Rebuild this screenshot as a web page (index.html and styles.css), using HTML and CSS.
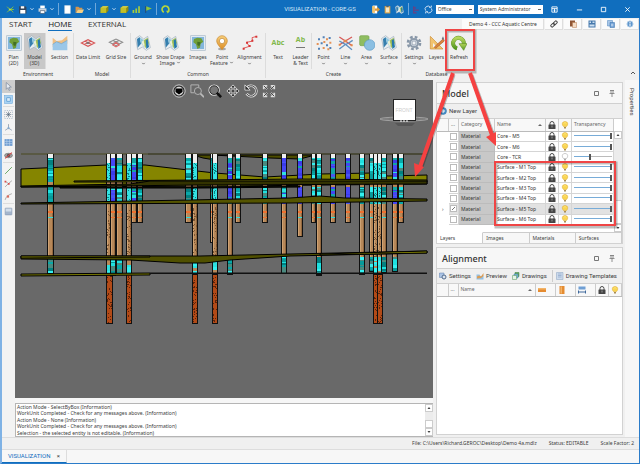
FILE: index.html
```html
<!DOCTYPE html>
<html lang="en">
<head>
<meta charset="utf-8">
<title>VISUALIZATION - CORE-GS</title>
<link rel="stylesheet" href="styles.css">
</head>
<body>
<svg class="sprite" aria-hidden="true">
  <defs>
    <linearGradient id="gold" x1="0" y1="0" x2="0" y2="1"><stop offset="0" stop-color="#f8cf79"/><stop offset="1" stop-color="#dc8d25"/></linearGradient>
    <linearGradient id="leaf" x1="0" y1="0" x2="0" y2="1"><stop offset="0" stop-color="#b5d65b"/><stop offset="1" stop-color="#549820"/></linearGradient>
    <symbol id="chev" viewBox="0 0 8 8"><path d="M2 3l2 2 2-2" fill="none" stroke="currentColor"/></symbol>
    <symbol id="logo" viewBox="0 0 16 16"><path d="M2 3l5 5-5 5M7 8h7M8 8l5-5M8 8l5 5" fill="none" stroke="#8ac33e" stroke-width="1.6"/><circle cx="7" cy="8" r="2" fill="#b9df45"/></symbol>
    <symbol id="save" viewBox="0 0 16 16"><path d="M2 2h11l2 2v11H2z" fill="#31445c"/><path d="M5 2h6v4H5zM4 9h9v6H4z" fill="#fff"/></symbol>
    <symbol id="print" viewBox="0 0 16 16"><path d="M4 1h8v5H4z" fill="#fff"/><path d="M1 6h14v6H1z" fill="#cbd5df"/><path d="M4 10h8v5H4z" fill="#fff" stroke="#31445c"/></symbol>
    <symbol id="page" viewBox="0 0 16 16"><path d="M3 1h10v14H3z" fill="#fff" stroke="#d6dde6"/></symbol>
    <symbol id="folder" viewBox="0 0 16 16"><path d="M1 3h5l2 2h5v3H5l-3 6H1z" fill="#d7954a"/><path d="M5 8h11l-3 6H2z" fill="#f6ce82"/></symbol>
    <symbol id="cube" viewBox="0 0 16 16"><path d="M1 5l4-3h10v8l-4 4H1z" fill="#8b8a10"/><path d="M1 5l4-3h10l-4 3z" fill="#e4df55"/><path d="M1 5h10v9H1z" fill="#c2bf27"/></symbol>
    <symbol id="bars" viewBox="0 0 16 16"><path d="M1 9h3v5H1zM6 6h3v8H6zM11 2h3v12h-3z" fill="#a7cd3a"/></symbol>
    <symbol id="flag" viewBox="0 0 16 16"><path d="M3 2v12" stroke="#31445c" stroke-width="1.5"/><path d="M4 2l10 4-10 4z" fill="#8fc43b"/></symbol>
    <symbol id="cycle" viewBox="0 0 16 16"><path d="M5 13A6 6 0 1 1 13 11" fill="none" stroke="#b6d63c" stroke-width="3"/><path d="M9 10h7l-4 5z" fill="#b6d63c"/></symbol>
    <symbol id="exit" viewBox="0 0 16 16"><path d="M3 1h8v14H3z" fill="#fff"/><path d="M2 2h5v12H2z" fill="#f2c26b"/><path d="M7 6h4V3l5 5-5 5v-3H7z" fill="#dd9a3a"/></symbol>
    <symbol id="clip" viewBox="0 0 16 16"><path d="M3 2h10v13H3z" fill="#dca44c"/><path d="M5 4h6v9H5z" fill="#f4e7c5"/><path d="M6 1h4v3H6z" fill="#54616f"/></symbol>
    <symbol id="map" viewBox="0 0 24 24"><path d="M1 5l6-4 6 5 6-4 4 17-6 4-6-5-7 4z" fill="#e9eef2" stroke="#9faebb"/><path d="M3 6l4-3 2 10-5 6z" fill="#367fae"/><path d="M7 3l6 5 1 11-5-7z" fill="#8fc7df"/><path d="M13 8l6-4 2 8-6 8z" fill="#a6c25a"/><path d="M10 10l3-2 1 7-2 2z" fill="#edf1d5"/><path d="M16 8l3-2 2 12-4 3z" fill="#287aaa"/></symbol>
    <symbol id="plan" viewBox="0 0 24 24"><rect x="1" y="1" width="22" height="22" fill="#e1eaf2" stroke="#a9bac8"/><rect x="3" y="3" width="18" height="18" fill="#83b6dc"/><path d="M6 6l5-2 6 1 3 5-4 3-1 6-4 2-2-7-4-3z" fill="#6f9e37"/><path d="M11 10l5 1-2 6-3-2z" fill="#426f24"/></symbol>
    <symbol id="section" viewBox="0 0 24 24"><path d="M1 4l6 5 8-1 8-7v12l-8 3-8-2-6 4z" fill="#f0bf83"/><path d="M1 14l6-4 7 3 9-5v15H1z" fill="#9bc7e8"/><path d="M1 14l6-4 7 3 9-5" fill="none" stroke="#6ba3cf"/></symbol>
    <symbol id="limit" viewBox="0 0 24 24"><path d="M2 12l10-5 10 5-10 5zM7 9l10 5M17 9L7 14" fill="none" stroke="#d85757" stroke-width="1.600"/><path d="M9 12l3-2 3 2-3 2z" fill="#777"/></symbol>
    <symbol id="gridsize" viewBox="0 0 24 24"><path d="M2 11l10-5 10 5-10 5zM7 8l10 5M17 8L7 13" fill="none" stroke="#8d8d8d" stroke-width="1.600"/><path d="M7 15l5-4 5 4-5 3z" fill="none" stroke="#df6565" stroke-width="1.600"/></symbol>
    <symbol id="pin" viewBox="0 0 24 24"><ellipse cx="12" cy="21" rx="6" ry="2" fill="#aaa"/><path d="M12 22C8 17 4 13 4 9a8 8 0 0 1 16 0c0 4-4 8-8 13z" fill="url(#gold)" stroke="#c88b34"/><circle cx="12" cy="9" r="4" fill="#fff" stroke="#b98231"/></symbol>
    <symbol id="align" viewBox="0 0 24 24"><path d="M2 20l9-3-4-6 9-2-1-5 7-2" fill="none" stroke="#e25555" stroke-width="1.4"/><path d="M1 19h3v3H1zM10 15h3v3h-3zM6 10h3v3H6zM14 7h3v3h-3zM20 1h3v3h-3z" fill="#d73636"/></symbol>
    <symbol id="points" viewBox="0 0 24 24"><g fill="#5281b7"><path d="M3 5h3v3H3zM10 2h3v3h-3zM19 3h3v3h-3zM7 11h3v3H7zM15 14h3v3h-3zM3 19h3v3H3zM20 18h3v3h-3z"/></g><g fill="#e59257"><path d="M15 5h3v3h-3zM1 12h3v3H1zM11 9h3v3h-3zM20 10h3v3h-3zM10 18h3v3h-3zM17 20h3v3h-3z"/></g></symbol>
    <symbol id="lines" viewBox="0 0 24 24"><path d="M2 3l9 6 10-6M2 15l9-6 10 7" fill="none" stroke="#d75b58" stroke-width="2"/><path d="M2 21l8-6 6-3 6-4M2 9l9 5 10 8" fill="none" stroke="#5f8fc0" stroke-width="2"/><path d="M9 7h4v4H9zM1 13h3v3H1zM19 14h3v3h-3z" fill="#e38a4b"/></symbol>
    <symbol id="area" viewBox="0 0 24 24"><rect x="1" y="1" width="14" height="15" rx="2" fill="#8fbd61" stroke="#77a64f"/><circle cx="16" cy="15" r="8" fill="#8bbfe2" stroke="#5e9bc7"/></symbol>
    <symbol id="gear" viewBox="0 0 24 24"><circle cx="12" cy="12" r="9" fill="none" stroke="#8796a7" stroke-width="4" stroke-dasharray="4 3.07"/><circle cx="12" cy="12" r="6" fill="#d9e0e7" stroke="#8e9cac" stroke-width="3"/><circle cx="12" cy="12" r="3" fill="#f2f4f6" stroke="#8392a4"/></symbol>
    <symbol id="draft" viewBox="0 0 24 24"><path d="M2 2v19h19z" fill="#f1c36e" stroke="#cf8e35"/><path d="M6 12v6h6z" fill="#f0f0f0"/><path d="M8 18L21 6l2 3-13 11z" fill="#db853d" stroke="#a75c28"/><path d="M19 6l2-4 2 5z" fill="#6f7380"/></symbol>
    <symbol id="refresh" viewBox="0 0 24 24"><path d="M9 20A8 8 0 1 1 19 14" fill="none" stroke="#608f29" stroke-width="6"/><path d="M9 20A8 8 0 1 1 19 14" fill="none" stroke="url(#leaf)" stroke-width="5"/><path d="M12 13h12l-5 10z" fill="url(#leaf)" stroke="#608f29"/></symbol>
    <symbol id="lock" viewBox="0 0 16 16"><path d="M4 8V5a4 4 0 0 1 8 0v3" fill="none" stroke="#4b4b4b" stroke-width="2"/><rect x="1" y="7" width="14" height="9" rx="1" fill="#454545"/><path d="M7 9h2v4H7z" fill="#999"/></symbol>
    <symbol id="bulb" viewBox="0 0 16 16"><path d="M5 11C1 7 2 1 8 1s7 6 3 10z" fill="#f9d552" stroke="#dba72d"/><path d="M6 5l2-2 2 2" fill="none" stroke="#fff8bf"/><path d="M6 12h4v3H6z" fill="#a88d55"/></symbol>
    <symbol id="bulboff" viewBox="0 0 16 16"><path d="M5 11C1 7 2 1 8 1s7 6 3 10z" fill="#fff" stroke="#999"/><path d="M6 12h4v3H6z" fill="#aaa"/></symbol>
    <symbol id="plus" viewBox="0 0 16 16"><circle cx="8" cy="8" r="7" fill="#4a90c8" stroke="#2c6ca5"/><path d="M8 4v8M4 8h8" stroke="#fff" stroke-width="2"/></symbol>
    <symbol id="maxi" viewBox="0 0 8 8"><path d="M2.500 2.500h4v4h-4z" fill="none" stroke="currentColor"/></symbol>
    <symbol id="tack" viewBox="0 0 8 8"><path d="M2 1.500h4M3 1v3M5 1v3M1.500 4.500h5M4 4v4" fill="none" stroke="currentColor" stroke-width=".8"/></symbol>
  </defs>
</svg>

<div class="window">
  <header class="titlebar">
    <div class="quick">
      <button class="qi" aria-label="Application"><svg><use href="#logo"/></svg></button>
      <button class="qi" aria-label="Save"><svg><use href="#save"/></svg></button>
      <button class="qc" aria-label="Save options"><svg><use href="#chev"/></svg></button>
      <button class="qi" aria-label="Print"><svg><use href="#print"/></svg></button>
      <button class="qc" aria-label="Print options"><svg><use href="#chev"/></svg></button>
      <i class="qs"></i>
      <button class="qi" aria-label="New"><svg><use href="#page"/></svg></button>
      <button class="qi" aria-label="Open"><svg><use href="#folder"/></svg></button>
      <button class="qc" aria-label="Open options"><svg><use href="#chev"/></svg></button>
      <i class="qs"></i>
      <button class="qi" aria-label="Solid"><svg><use href="#cube"/></svg></button>
      <button class="qc" aria-label="Solid options"><svg><use href="#chev"/></svg></button>
      <button class="qi" aria-label="Block"><svg><use href="#cube"/></svg></button>
      <button class="qi" aria-label="Chart"><svg><use href="#bars"/></svg></button>
      <button class="qi" aria-label="Flag"><svg><use href="#flag"/></svg></button>
      <i class="qs"></i>
      <button class="qi" aria-label="Update"><svg><use href="#cycle"/></svg></button>
    </div>
    <h1>VISUALIZATION - CORE-GS</h1>
    <div class="quick right">
      <button class="qi" aria-label="Export"><svg><use href="#exit"/></svg></button>
      <button class="qi" aria-label="Clipboard"><svg><use href="#clip"/></svg></button>
      <button class="qi" aria-label="Map"><svg><use href="#map"/></svg></button>
      <i class="qs"></i>
      <button class="qi" aria-label="Tree"><svg viewBox="0 0 16 16"><path d="M3 2v12h5M3 5h4M3 9h9" fill="none" stroke="#6d3f80" stroke-width="2"/></svg></button>
      <button class="qi" aria-label="Sync"><svg viewBox="0 0 16 16"><path d="M3 10a5 5 0 0 1 8-6M13 6a5 5 0 0 1-8 6M9 4h4V1M7 12H3v3" fill="none" stroke="#dbe9f7" stroke-width="1.6"/></svg></button>
      <select class="office" aria-label="Office"><option>Office</option></select>
      <select class="role" aria-label="Role"><option>System Administrator</option></select>
      <div class="winbtns">
        <button aria-label="Ribbon display"><svg viewBox="0 0 8 8"><path d="M1 1h6v6H1zM1 3h6M4 3v4M3 5h2" fill="none" stroke="#fff"/></svg></button>
        <button aria-label="Minimize"><svg viewBox="0 0 8 8"><path d="M1 4.500h6" stroke="#fff"/></svg></button>
        <button aria-label="Maximize"><svg viewBox="0 0 8 8"><path d="M1.500 1.500h5v5h-5z" fill="none" stroke="#fff"/></svg></button>
        <button aria-label="Close"><svg viewBox="0 0 8 8"><path d="M1.500 1.500l5 5M6.500 1.500l-5 5" stroke="#fff"/></svg></button>
      </div>
    </div>
  </header>

  <nav class="tabs">
    <a href="#start">START</a><a href="#home" class="on">HOME</a><a href="#external">EXTERNAL</a>
    <div class="project">
      <span>Demo 4 - CCC Aquatic Centre</span>
      <button aria-label="Link"><svg viewBox="0 0 16 16"><g fill="none" stroke="#444" stroke-width="2"><rect x="1" y="8" width="8" height="5" rx="2" transform="rotate(-45 5 10)"/><rect x="7" y="3" width="8" height="5" rx="2" transform="rotate(-45 11 6)"/></g></svg></button>
      <button aria-label="Paste"><svg viewBox="0 0 16 16"><path d="M2 1h10v12H2z" fill="#8f5636"/><path d="M7 5h8v10H7z" fill="#f3dcc6" stroke="#b67b4f"/></svg></button>
      <button aria-label="Calendar"><svg viewBox="0 0 16 16"><path d="M1 1h14v14H1z" fill="#4679ad"/><path d="M3 3h3v3H3zM9 3h4v3H9zM3 9h10v4H3z" fill="#cfe1f2"/></svg></button>
      <button aria-label="Copy"><svg viewBox="0 0 16 16"><path d="M1 1h10v11H1z" fill="#a9c7e8" stroke="#4b82bd"/><path d="M6 5h9v10H6z" fill="#6fa0d5" stroke="#376ca8"/><path d="M10 7v6M8 10h5" stroke="#fff"/></svg></button>
      <button aria-label="Information"><svg viewBox="0 0 16 16"><circle cx="8" cy="8" r="6" fill="#5f96cc" stroke="#a8c6e4" stroke-width="2"/><path d="M8 4v2M8 7v5" stroke="#fff" stroke-width="2"/></svg></button>
    </div>
  </nav>

  <div class="ribbon">
    <section class="group env"><div class="items">
      <button class="it s"><svg><use href="#plan"/></svg><span>Plan<br>(2D)</span></button>
      <button class="it s sel"><svg><use href="#map"/></svg><span>Model<br>(3D)</span></button>
      <button class="it l div"><svg><use href="#section"/></svg><span>Section</span></button>
    </div><h2>Environment</h2></section>
    <section class="group"><div class="items">
      <button class="it l"><svg><use href="#limit"/></svg><span>Data Limit</span></button>
      <button class="it l"><svg><use href="#gridsize"/></svg><span>Grid Size</span></button>
    </div><h2>Model</h2></section>
    <section class="group"><div class="items">
      <button class="it m"><svg><use href="#map"/></svg><span>Ground</span><svg class="c"><use href="#chev"/></svg></button>
      <button class="it xl"><svg><use href="#map"/></svg><span>Show Drape<br>Image <svg class="c"><use href="#chev"/></svg></span></button>
      <button class="it m"><svg><use href="#plan"/></svg><span>Images</span></button>
      <button class="it m"><svg><use href="#pin"/></svg><span>Point<br>Feature <svg class="c"><use href="#chev"/></svg></span></button>
      <button class="it xl"><svg><use href="#align"/></svg><span>Alignment</span><svg class="c"><use href="#chev"/></svg></button>
    </div><h2>Common</h2></section>
    <section class="group"><div class="items">
      <button class="it m"><b class="abc">Abc</b><span>Text</span></button>
      <button class="it s"><b class="abc lead">Ab</b><span>Leader<br>&amp; Text</span></button>
      <button class="it m div"><svg><use href="#points"/></svg><span>Point</span><svg class="c"><use href="#chev"/></svg></button>
      <button class="it s"><svg><use href="#lines"/></svg><span>Line</span><svg class="c"><use href="#chev"/></svg></button>
      <button class="it s"><svg><use href="#area"/></svg><span>Area</span><svg class="c"><use href="#chev"/></svg></button>
      <button class="it m"><svg><use href="#map"/></svg><span>Surface</span><svg class="c"><use href="#chev"/></svg></button>
    </div><h2>Create</h2></section>
    <section class="group last"><div class="items">
      <button class="it m"><svg><use href="#gear"/></svg><span>Settings</span><svg class="c"><use href="#chev"/></svg></button>
      <button class="it s"><svg><use href="#draft"/></svg><span>Layers</span></button>
      <button class="it m"><svg><use href="#refresh"/></svg><span>Refresh</span></button>
    </div><h2>Database</h2></section>
    <button class="collapse" aria-label="Collapse ribbon"><svg viewBox="0 0 8 8"><path d="M2 5l2-2 2 2" fill="none" stroke="#555"/></svg></button>
  </div>

  <main class="work">
    <aside class="tools">
      <button class="on" aria-label="Select"><svg viewBox="0 0 16 16"><path d="M4 1v12l3-3 2 5 2-1-2-5h4z" fill="#e6ebf2" stroke="#65758c"/></svg></button>
      <button aria-label="Select by box"><svg viewBox="0 0 16 16"><rect x="1" y="1" width="14" height="14" fill="#a9d2f3" stroke="#6ba9dc"/><rect x="5" y="5" width="6" height="6" fill="#d9ecfb" stroke="#3b83c0"/></svg></button>
      <hr>
      <button aria-label="Extents"><svg viewBox="0 0 16 16"><rect x="1" y="1" width="14" height="14" fill="none" stroke="#7d97b1" stroke-dasharray="2 2"/><path d="M8 3v10M3 8h10M4 4l8 8M12 4l-8 8" stroke="#4c6076"/></svg></button>
      <button aria-label="Axes"><svg viewBox="0 0 16 16"><path d="M8 2v7l-6 4M8 9l6 4" fill="none" stroke="#5d7390"/><circle cx="8" cy="9" r="2" fill="#88add0"/></svg></button>
      <hr>
      <button aria-label="Grid"><svg viewBox="0 0 16 16"><path d="M1 2h14v12H1z" fill="#6c9bd0"/><path d="M1 6h14M1 10h14M5 2v12M10 2v12" stroke="#c4daf0"/></svg></button>
      <button aria-label="Hide"><svg viewBox="0 0 16 16"><ellipse cx="8" cy="8" rx="7" ry="4" fill="#a4a4a4" stroke="#666"/><circle cx="8" cy="8" r="3" fill="#555"/><path d="M2 13L14 3" stroke="#d54848" stroke-width="2"/></svg></button>
      <hr>
      <button aria-label="Line"><svg viewBox="0 0 16 16"><path d="M2 14L14 2" stroke="#549d4f" stroke-width="1.5"/></svg></button>
      <button aria-label="Split"><svg viewBox="0 0 16 16"><path d="M2 14l6-6 6-5M2 4l6 4" fill="none" stroke="#777"/><path d="M1 3h3v3H1zM7 7h3v3H7z" fill="#d84b4b"/></svg></button>
      <button aria-label="Curve"><svg viewBox="0 0 16 16"><path d="M2 14q2-8 12-11" fill="none" stroke="#777"/><path d="M5 6h4v4H5z" fill="#d86a5b"/></svg></button>
      <hr>
      <button aria-label="Block"><svg viewBox="0 0 16 16"><rect x="2" y="2" width="12" height="12" rx="1" fill="#a4b5cc" stroke="#8194af"/><path d="M3 3h10v5H3z" fill="#d3deeb"/></svg></button>
    </aside>

    <div class="center">
      <div class="view">
        <svg id="scene" viewBox="15 80 418 318" preserveAspectRatio="xMinYMin slice" role="img" aria-label="Borehole model"></svg>
        <div class="viewbar">
          <button aria-label="Look"><svg viewBox="0 0 16 16"><circle cx="8" cy="8" r="7" fill="#333" stroke="#ddd"/><circle cx="8" cy="8" r="5" fill="#ddd"/><path d="M4 5h8v4l-4 3-4-3z" fill="#000"/></svg></button>
          <button aria-label="Zoom window"><svg viewBox="0 0 16 16"><path d="M1 1h9v3M1 1v9h4" fill="none" stroke="#bbb"/><circle cx="9" cy="8" r="4" fill="#666" stroke="#bbb"/><path d="M12 11l4 4" stroke="#bbb" stroke-width="2"/></svg></button>
          <button aria-label="Zoom"><svg viewBox="0 0 16 16"><circle cx="7" cy="7" r="5" fill="none" stroke="#ddd" stroke-width="3"/><circle cx="7" cy="7" r="5" fill="#777" stroke="#222"/><path d="M10 10l5 5" stroke="#111" stroke-width="3"/></svg></button>
          <button aria-label="Pan"><svg viewBox="0 0 16 16"><path d="M8 1l3 3H9v3h3V5l3 3-3 3V9H9v3h2l-3 3-3-3h2V9H4v2L1 8l3-3v2h3V4H5z" fill="#333" stroke="#ddd"/></svg></button>
          <button aria-label="Rotate"><svg viewBox="0 0 16 16"><path d="M3 5a6 6 0 1 1 0 6" fill="none" stroke="#ddd" stroke-width="3"/><path d="M3 5a6 6 0 1 1 0 6" fill="none" stroke="#333"/><path d="M1 1v6h6z" fill="#333" stroke="#ddd"/></svg></button>
          <button aria-label="Zoom extents"><svg viewBox="0 0 16 16"><path d="M2 6V2h4M2 2l4 4M10 2h4v4M14 2l-4 4M2 10v4h4M2 14l4-4M14 10v4h-4M14 14l-4-4" fill="none" stroke="#ddd" stroke-width="2"/><path d="M2 2l4 4M14 2l-4 4M2 14l4-4M14 14l-4-4" stroke="#333"/></svg></button>
        </div>
      </div>
      <div class="splitter"></div>
      <div class="log">
        <div class="lines"><p>Action Mode - SelectByBox (Information)</p><p>WorkUnit Completed - Check for any messages above. (Information)</p><p>Action Mode - None (Information)</p><p>WorkUnit Completed - Check for any messages above. (Information)</p><p>Selection - the selected entity is not editable. (Information)</p></div>
        <div class="scroll"><button aria-label="Scroll up"><svg viewBox="0 0 8 8"><path d="M2 5l2-2 2 2z"/></svg></button><i></i><b></b><button aria-label="Scroll down"><svg viewBox="0 0 8 8"><path d="M2 3l2 2 2-2z"/></svg></button></div>
      </div>
    </div>

    <aside class="panels">
      <section class="panel">
        <header><h2>Model</h2><button aria-label="Maximize"><svg><use href="#maxi"/></svg></button><button aria-label="Pin"><svg><use href="#tack"/></svg></button></header>
        <div class="bar"><button><svg><use href="#plus"/></svg>New Layer</button></div>
        <div class="tablewrap">
          <table class="layers">
            <colgroup><col class="c1"><col class="c2"><col class="c3"><col><col class="c5"><col class="c5"><col class="c7"></colgroup>
            <thead><tr><th></th><th>...</th><th><em></em>Category</th><th><em></em>Name</th><th class="ic"><svg><use href="#lock"/></svg></th><th class="ic"><svg><use href="#bulb"/></svg></th><th>Transparency</th></tr></thead>
            <tbody id="rows"></tbody>
          </table>
          <div class="scroll tall"><button aria-label="Scroll up"><svg viewBox="0 0 8 8"><path d="M2 5l2-2 2 2z"/></svg></button><i></i><b></b><button aria-label="Scroll down"><svg viewBox="0 0 8 8"><path d="M2 3l2 2 2-2z"/></svg></button></div>
        </div>
        <nav class="ptabs"><a href="#layers" class="on">Layers</a><a href="#images">Images</a><a href="#materials">Materials</a><a href="#surfaces">Surfaces</a></nav>
      </section>
      <section class="panel grow">
        <header><h2>Alignment</h2><button aria-label="Maximize"><svg><use href="#maxi"/></svg></button><button aria-label="Pin"><svg><use href="#tack"/></svg></button></header>
        <div class="bar">
          <button><svg viewBox="0 0 16 16"><path d="M1 2h9v9H1z" fill="#abc3e4" stroke="#5d7fae"/><circle cx="10" cy="10" r="4" fill="#dce5ef" stroke="#506a8d" stroke-width="2"/></svg>Settings</button>
          <button><svg viewBox="0 0 16 16"><path d="M1 5h6l2 3h6v7H1z" fill="#92bfe3"/><path d="M2 9l4-2 4 2 5-7v6l-5 4-8 1z" fill="#dd9d54"/></svg>Preview</button>
          <button><svg viewBox="0 0 16 16"><path d="M6 1h8v8H6z" fill="#66a861" stroke="#357d3b"/><path d="M4 4h8v8H4z" fill="#7fbad8" stroke="#3c789f"/><path d="M1 7h8v8H1z" fill="#e6f3e4" stroke="#4d9357"/></svg>Drawings</button>
          <button class="div"><svg viewBox="0 0 16 16"><path d="M1 1h13v14H1z" fill="#ccdaeb" stroke="#88a0c1"/><path d="M4 4h7M4 7h7M4 10h7" stroke="#7493bd"/></svg>Drawing Templates</button>
        </div>
        <div class="sheet"><table>
          <colgroup><col class="c1"><col class="c2"><col><col class="c20"><col class="c20"><col class="c20"><col class="c5"><col class="c5"></colgroup>
          <thead><tr><th></th><th>...</th><th><em></em>Name</th><th class="il"><svg viewBox="0 0 16 16"><path d="M0 4h16v8H0z" fill="#e58b30"/><path d="M0 4h16v3H0z" fill="#f2b468"/></svg></th><th class="il"><svg viewBox="0 0 16 16"><path d="M3 0h10v16H3z" fill="#e58b30"/><path d="M5 1h3v14H5z" fill="#f2b468"/></svg></th><th class="il"><svg viewBox="0 0 16 16"><path d="M1 1h14v6H1z" fill="#6f9fd4"/><path d="M1 9v6M15 9v6M1 12h14" stroke="#3e689c" stroke-width="2"/></svg></th><th class="ic"><svg><use href="#lock"/></svg></th><th class="ic"><svg><use href="#bulb"/></svg></th></tr></thead>
        </table></div>
      </section>
    </aside>
    <aside class="props"><a href="#properties">Properties</a></aside>
  </main>

  <footer class="status"><span>File: C:\Users\Richard.GEROC\Desktop\Demo 4a.mdlz</span><span>Status: EDITABLE</span><span>Scale Factor: 2</span></footer>
  <nav class="docs"><a href="#visualization">VISUALIZATION</a><button aria-label="Close tab">×</button></nav>

  <svg class="callouts" viewBox="0 0 640 464" preserveAspectRatio="xMinYMin meet" aria-hidden="true">
    <g fill="none" stroke="#000" stroke-opacity=".25" stroke-width="3"><path d="M447 31h28v41h-28zM496 163h120v64H496zM454 75l-32 92M472 75l22 61"/></g>
    <g fill="none" stroke="#ef4545" stroke-width="2"><path d="M446 30h28v40h-28zM495 162h120v63H495z"/></g>
    <path d="M453 73l-33 94M470 73l22 62" stroke="#f54141" stroke-width="4" fill="none"/>
    <path d="M415 177l-1-14 10 4zM496 146l-10-9 10-5z" fill="#f54141"/>
  </svg>
</div>
<script src="app.js"></script>
</body>
</html>
```
FILE: styles.css
```css
* { box-sizing: border-box; }
body { margin: 0; font: 5px/7px "Noto Sans", "Liberation Sans", sans-serif; color: #3c3c3c; background: #f0f0f0; }
button, select, input { font: inherit; color: inherit; margin: 0; padding: 0; border: 0; background: none; }
a { color: inherit; text-decoration: none; }
h1, h2, p { margin: 0; font-weight: 400; font-size: inherit; }
svg { display: block; }
.sprite { position: absolute; width: 0; height: 0; }
.window { position: relative; display: flex; flex-direction: column; min-height: 100vh; border: solid #2b7cc9; border-width: 0 1px 1px 2px; border-left-color: #7fb2e5; }

.titlebar { display: grid; grid-template-columns: 1fr auto 1fr; align-items: center; height: 18px; margin: 0 -1px 0 -2px; background: #106ebe; color: #fff; }
.titlebar h1 { color: #d5e6f6; font: 6px/8px "Roboto", sans-serif; }
.quick { display: flex; align-items: center; padding-left: 4px; }
.quick.right { padding-left: 14px; }
.qi { width: 12px; display: grid; place-items: center; }
.qi svg { width: 9px; height: 9px; }
.qc { width: 8px; display: grid; place-items: center; }
.qc svg { width: 6px; height: 6px; }
.qs { width: 1px; height: 12px; margin: 0 2px; background: #6ea7da; }
.quick select { appearance: none; height: 9px; padding-left: 2px; color: #444; background: #fff linear-gradient(#666, #666) no-repeat right 2px center / 3px 1px; }
.office { width: 38px; margin: 0 4px 0 1px; }
.role { width: 65px; }
.winbtns { display: flex; flex: 1; }
.winbtns button { flex: 1; display: grid; place-items: center; }
.winbtns svg { width: 7px; height: 7px; }

.tabs { display: flex; align-items: flex-start; gap: 16px; padding-left: 7px; height: 15px; font: 7px/12px "Open Sans", sans-serif; font-size: 8px; color: #333; }
.tabs .on { border-bottom: 1px solid #106ebe; color: #111; }
.project { display: flex; gap: 1px; margin: 1px 0 0 auto; font: 5px/11px "Noto Sans", sans-serif; }
.project span, .project button { height: 11px; line-height: 11px; background: #fbfbfb; border: solid #dedede; border-width: 0 1px 1px 0; }
.project span { width: 82px; padding-left: 7px; white-space: nowrap; }
.project button { width: 18px; display: grid; place-items: center; }
.project svg { width: 8px; height: 8px; }

.ribbon { display: flex; height: 47px; padding-bottom: 1px; background: #f0f0f0; }
.group { display: flex; flex-direction: column; justify-content: space-between; border-right: 1px solid #dcdcdc; margin-bottom: 1px; }
.group.last { border: 0; }
.env { padding-left: 1px; }
.group h2 { text-align: center; line-height: 8px; }
.items { display: flex; }
.it { display: flex; flex-direction: column; align-items: center; height: 36px; padding-top: 2px; line-height: 6px; white-space: nowrap; }
.it > svg:first-child { width: 16px; height: 16px; margin-bottom: 3px; flex: none; }
.it svg.c { width: 5px; height: 5px; margin-top: 1px; }
.it span svg.c { display: inline-block; margin: 0; }
.it.s { width: 21px; }
.it.m { width: 24px; }
.it.l { width: 28px; }
.it.xl { width: 31px; }
.it.sel { background: #c8c8c8; }
.it.div { border-left: 1px solid #dcdcdc; }
.abc { height: 16px; margin-bottom: 3px; font: 700 7px/15px "Open Sans", sans-serif; color: #80b84a; }
.lead { line-height: 10px; height: 13px; margin-bottom: 6px; border-bottom: 1px solid #777; }
.collapse { margin: auto 2px 2px auto; width: 8px; }

.work { display: flex; flex: 1; min-height: 0; }
.tools { width: 13px; background: #f3f3f3; }
.tools button { width: 13px; height: 13px; display: grid; place-items: center; }
.tools button.on { background: #cdcdcd; }
.tools svg { width: 9px; height: 9px; }
.tools hr { margin: 0 1px 1px; border: 0; border-top: 1px solid #ddd; }
.center { flex: 1; min-width: 0; display: flex; flex-direction: column; }
.view { position: relative; flex: 1; min-height: 318px; background: #696969; }
#scene { position: absolute; inset: 0; width: 100%; height: 100%; }
.viewbar { position: absolute; top: 4px; left: 0; right: 0; display: flex; gap: 4px; justify-content: center; }
.viewbar svg { width: 14px; height: 14px; }
.splitter { height: 5px; background: #f6f6f6; }
.log { display: flex; height: 34px; border: 1px solid #b5b5b5; border-right: 0; background: #fff; }
.lines { flex: 1; display: flex; flex-direction: column; padding-left: 1px; white-space: nowrap; line-height: 6px; }
.lines p { flex: 1; }
.scroll { display: flex; flex-direction: column; width: 8px; background: #ececec; }
.scroll button { height: 8px; border: 1px solid #ccc; background: #fff; }
.scroll i { flex: 1; }
.scroll b { height: 8px; border: 1px solid #ccc; background: #fff; }

.panels { width: 187px; margin-left: 3px; display: flex; flex-direction: column; gap: 3px; padding: 2px 0; }
.panel { display: flex; flex-direction: column; border: 1px solid #d2d2d2; background: #f7f7f7; }
.grow { flex: 1; }
.panel header { display: flex; align-items: center; gap: 8px; height: 20px; padding: 0 6px 0 5px; }
.panel header h2 { flex: 1; font: 500 9px/19px "Noto Sans", sans-serif; color: #333; }
.panel header svg { width: 8px; height: 8px; color: #777; }
.bar { display: flex; align-items: center; height: 16px; padding-left: 2px; background: #efefef; border: 1px solid #d0d0d0; border-width: 1px 0; font: 6px/12px "Roboto", sans-serif; }
.bar button { display: flex; align-items: center; gap: 2px; height: 12px; margin-right: 5px; white-space: nowrap; }
.bar svg { width: 8px; height: 8px; }
.bar .div { padding-left: 3px; margin: 0; border-left: 1px solid #ccc; }
table { width: 100%; table-layout: fixed; border-collapse: collapse; }
th { height: 12px; padding: 0 0 0 2px; font-weight: 400; text-align: left; border-right: 1px solid #ccc; border-bottom: 1px solid #bbb; background: #f8f8f8; color: #666; }
th em { float: right; margin: 3px 3px 0 0; border: 2px solid transparent; border-top: 0; border-bottom-color: #666; }
th svg, td svg { width: 8px; height: 8px; margin: auto; }
th.ic, td.ic { padding: 0; }
th.il svg { margin: 0; }
.c1 { width: 11px; } .c2 { width: 10px; } .c3 { width: 36px; } .c5 { width: 13px; } .c7 { width: 42px; } .c20 { width: 20px; }
.tablewrap { display: flex; height: 113px; background: #fff; }
.layers { flex: 1; height: 106px; color: #333; }
td { height: 10px; padding: 0 0 0 2px; line-height: 8px; border: 1px solid #d5d5d5; white-space: nowrap; }
td:first-child { padding-left: 4px; border-color: #fff; }
td.cat { background: #c8c8c8; border-color: #bcbcbc; }
tr.cur td:not(.cat, :first-child) { background: #e2e2e2; }
td input[type=checkbox] { appearance: none; display: block; width: 7px; height: 7px; margin: auto; border: 1px solid #bbb; background: #fff; }
td.chk { padding: 0; }
td input[type=checkbox]:checked { background: #fff linear-gradient(135deg, transparent 42%, #777 42%, #777 58%, transparent 58%) no-repeat center / 3px 3px; }
td input[type=range] { appearance: none; display: block; width: 38px; height: 8px; background: linear-gradient(90deg, #78acd8 var(--v), #bbb var(--v)) no-repeat 0 3px / 100% 1px; }
td input::-webkit-slider-thumb { appearance: none; width: 2px; height: 6px; background: #555; }
.tall { margin-top: 12px; width: 8px; }
.tall b { height: 24px; }
.ptabs { display: flex; height: 11px; }
.ptabs a { flex: 1; padding-left: 3px; line-height: 10px; border: 1px solid #ccc; border-width: 1px 1px 0 0; }
.ptabs .on { background: #fff; border-top-color: #fff; }
.sheet { flex: 1; background: #fff; }
.props { width: 14px; margin-left: 2px; padding: 8px 0 0 4px; background: #f7f7f7; font: 6px/7px "Roboto", sans-serif; }
.props a { writing-mode: vertical-rl; }

.status { display: flex; justify-content: flex-end; gap: 12px; height: 12px; padding-right: 5px; line-height: 11px; border-top: 1px solid #ddd; }
.docs { display: flex; height: 14px; background: #f7f7f7; border-top: 1px solid #ddd; font: 6px/12px "Roboto", sans-serif; }
.docs a { padding-left: 6px; color: #106ebe; border-bottom: 1px solid #106ebe; }
.docs button { width: 17px; border-bottom: 1px solid #106ebe; border-right: 1px solid #ddd; }
.callouts { position: absolute; top: 0; left: -2px; width: 640px; height: 464px; pointer-events: none; }
```
FILE: app.js
```js
// Layer rows: name, transparency, visible, current
const layers = [
  ["Core - M5", 100, 1], ["Core - M6", 100, 1], ["Core - TCR", 43, 0],
  ["Surface - M1 Top", 100, 1], ["Surface - M2 Top", 100, 1], ["Surface - M3 Top", 100, 1],
  ["Surface - M4 Top", 100, 1], ["Surface - M5 Top", 100, 1, 1], ["Surface - M6 Top", 100, 1]
];
document.getElementById("rows").innerHTML = layers.map(([name, v, lit, cur]) =>
  `<tr class="${cur ? "cur" : ""}"><td>${cur ? "›" : ""}</td><td class="chk"><input type="checkbox" aria-label="${name}" ${cur ? "checked" : ""}></td>` +
  `<td class="cat">Material</td><td>${name}</td><td class="ic"><svg><use href="#lock"/></svg></td><td class="ic"><svg><use href="#bulb${lit ? "" : "off"}"/></svg></td>` +
  `<td><input type="range" value="${v}" aria-label="Transparency of ${name}" style="--v:${v}%"></td></tr>`).join("");

// Seeded generator keeps the strata identical on every load
let seed = 11;
const rnd = () => (seed = (seed * 16807) % 2147483647) / 2147483647;
const pick = a => a[Math.floor(rnd() * a.length)];
const rect = (x, y, w, h, f) => `<rect x="${x}" y="${y}" width="${w}" height="${h}" fill="${f}"/>`;
const poly = (p, f) => `<polygon points="${p}" fill="${f}" stroke="#000" stroke-width="1"/>`;

const sea = ["#1fe0e0", "#079a9a", "#048080", "#35f0f0", "#0aa8a8", "#4b8a80"];
const blue = ["#4545f5", "#3b3be8", "#4545f5", "#12a5a5", "#30e0e0", "#4a58f0"];
const tan = ["#b9895a", "#c09060", "#b08050"];

// Borehole: left edge, width, bottom, upper palette (b blue, s teal, c speckled cyan)
const holes = [
  [48, 5, 274, "s"], [107, 5, 324, "c"], [111, 4, 276, "b"], [117, 5, 274, "s"], [127, 4, 324, "c"],
  [132, 4, 223, "b"], [138, 4, 223, "s"], [186, 5, 223, "s"], [193, 4, 324, "c"], [211, 2, 243, "s"],
  [213, 4, 324, "c"], [228, 4, 275, "b"], [236, 4, 223, "s"], [263, 4, 223, "s"], [282, 4, 274, "b"],
  [298, 4, 237, "b"], [312, 3, 223, "s"], [317, 4, 276, "s"], [331, 4, 223, "b"], [346, 4, 223, "b"],
  [360, 4, 275, "s"], [370, 4, 272, "s"], [374, 4, 324, "c"], [378, 4, 324, "c"], [382, 4, 273, "s"],
  [393, 4, 272, "b"], [399, 4, 223, "s"]
];
function strata(x, w, y0, y1, pal) {
  let s = "";
  for (let y = y0; y < y1;) { const h = Math.min(1 + Math.floor(rnd() * 3), y1 - y); s += rect(x, y, w, h, pick(pal)); y += h; }
  return s;
}
function specks(x, w, y0, y1, c) {
  let s = "";
  for (let i = 0; i < (y1 - y0) * 0.8; i++) s += rect(x + Math.floor(rnd() * w), y0 + Math.floor(rnd() * (y1 - y0)), 1, 1, c);
  return s;
}
function hole([x, w, end, kind]) {
  let s = rect(x - 1, 154, w + 2, end - 154, "#111");
  s += rect(x, 154, w, kind === "c" ? 9 : 4, "#eee");
  const top = kind === "c" ? 163 : 158;
  s += kind === "c" ? rect(x, top, w, 205 - top, "#35e2e2") + specks(x, w, top, 205, "#078585")
                    : strata(x, w, top, 205, kind === "b" ? blue : sea);
  s += strata(x, w, 182, 187, tan);
  const base = Math.min(end - 1, 257);
  s += rect(x, 204, w, base - 204, "#b78859") + rect(x, 204, 1, base - 204, "#cfa273") + rect(x + w - 1, 204, 1, base - 204, "#93683f");
  if (kind === "c") s += specks(x, w, 206, base, "#7a5533");
  else s += rect(x, 211, w, 2, "#ef7030") + rect(x, 217, w, 1, pick(["#2fdcdc", "#ef7030"]));
  if (end > 257) s += strata(x, w, 257, Math.min(end, 275) - 1, kind === "c" ? ["#35f0f0", "#2fe0e0", "#35f0f0", "#b78859"] : sea);
  if (end > 300) s += rect(x, 275, w, end - 276, "#b24a17") + specks(x, w, 276, end - 1, "#5c230a");
  return s;
}

document.getElementById("scene").innerHTML =
  rect(21, 153.5, 127, 1, "#4a4a20") + rect(148, 153.5, 279, 1, "#2a2a08") +
  poly("193,155 210,155 215,160 203,158", "#4d4d00") + poly("212,155 315,155 300,159 270,158", "#4d4d00") +
  poly("21,169 107,165 145,165 188,170 215,173 265,177 320,174 372,173 388,176 427,175 427,184 232,186 21,187", "#858500") +
  holes.map(hole).join("") +
  poly("74,181 200,180 300,179 427,180 427,182 232,182 74,182", "#6a6a00") +
  poly("21,186 130,184 150,181 427,181 427,184 200,185 21,187", "#333300") +
  poly("60,187 200,187 300,186 300,187 200,188 60,188", "#1c1c00") +
  poly("21,203 190,200 290,198 320,196 345,198 427,199 427,201 290,203 21,204", "#555500") +
  poly("21,256 200,256 290,254 427,251 427,253 290,256 230,260 205,263 180,263 130,260 21,259", "#505000") +
  poly("21,256 150,256 150,257 21,258", "#8b8b00") + poly("320,254 427,251 427,253 320,255", "#8b8b00") +
  poly("21,274 150,273 150,275 21,276", "#777700") + rect(150, 272.5, 277, 1.5, "#111") +
  // view cube
  `<ellipse cx="404" cy="119" rx="24" ry="2" fill="none" stroke="#bbb" stroke-width=".7"/><ellipse cx="404" cy="119" rx="20" ry="1" fill="none" stroke="#888" stroke-width=".7"/>` +
  `<path d="M395 123h20l-3 3h-14z" fill="#444" opacity=".5"/><rect x="393.500" y="99.500" width="22" height="21" fill="#fff" stroke="#222"/>` +
  `<text x="404" y="112" text-anchor="middle" font-family="Liberation Sans" font-size="5" fill="#ccc">FRONT</text><path d="M400 121h9" stroke="#fff" stroke-dasharray="2 1"/>`;
```
